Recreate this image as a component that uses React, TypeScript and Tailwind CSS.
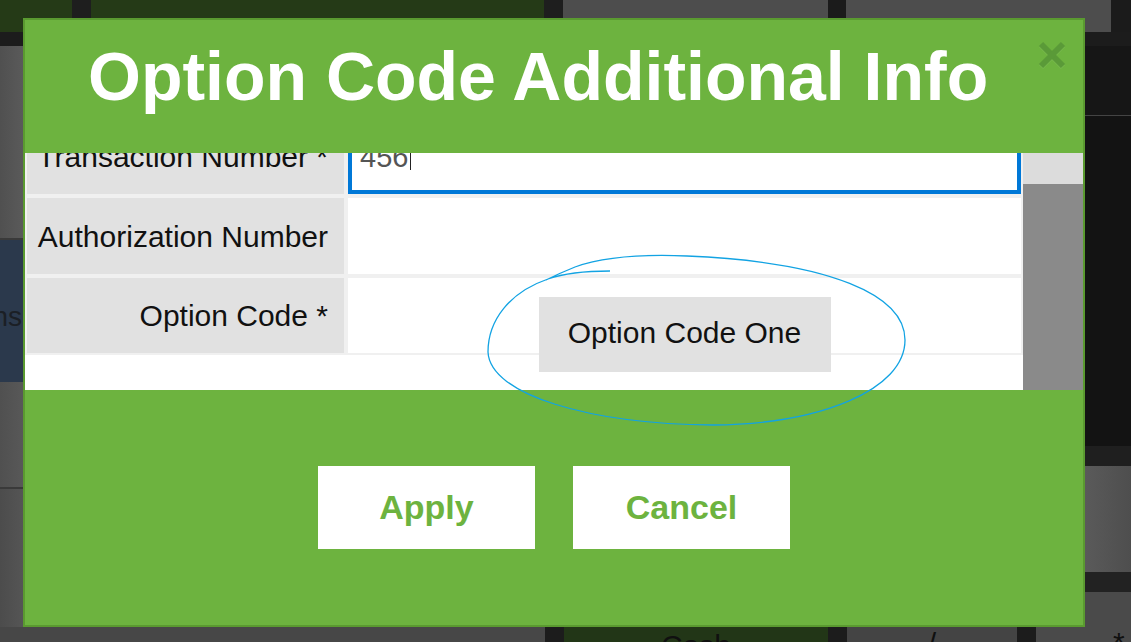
import React from "react";

const font = { fontFamily: '"Liberation Sans", Arial, sans-serif' };

const TopStrip = () => (
  <div className="flex h-[32px]">
    <div className="w-[72px] bg-[#253a17]" />
    <div className="w-[19px] bg-[#1e1e1e]" />
    <div className="w-[453px] bg-[#253a17]" />
    <div className="w-[19px] bg-[#1e1e1e]" />
    <div className="w-[265px] bg-[#4d4d4d]" />
    <div className="w-[18px] bg-[#1b1b1b]" />
    <div className="w-[265px] bg-[#4d4d4d]" />
    <div className="flex-1 bg-[#1b1b1b]" />
  </div>
);

const LeftColumn = () => (
  <div className="flex w-[23px] flex-col">
    <div className="h-[192px] bg-gradient-to-r from-[#505050] to-[#5a5a5a]" />
    <div className="h-[2px] bg-[#3a3a3a]" />
    <div className="flex h-[142px] items-center justify-end overflow-hidden bg-[#2b394c] pt-[12px]">
      <span className="whitespace-nowrap pr-[1px] text-[28px] text-[#1b1f25]">Trans</span>
    </div>
    <div className="h-[105px] bg-gradient-to-r from-[#505050] to-[#585858]" />
    <div className="h-[2px] bg-[#3a3a3a]" />
    <div className="flex-1 bg-gradient-to-r from-[#4c4c4c] to-[#555555]" />
  </div>
);

const RightColumn = () => (
  <div className="flex w-[46px] flex-col">
    <div className="h-[69px] bg-[#161616]" />
    <div className="h-[1px] bg-[#444444]" />
    <div className="h-[330px] bg-[#131313]" />
    <div className="h-[20px] bg-[#1f1f1f]" />
    <div className="h-[106px] bg-gradient-to-r from-[#5a5a5a] to-[#4e4e4e]" />
    <div className="h-[20px] bg-[#222222]" />
    <div className="flex-1 bg-[#4a4a4a]" />
  </div>
);

const BottomStrip = () => (
  <div className="flex h-[15px] overflow-hidden text-[30px] leading-none text-[#101010]">
    <div className="w-[545px] bg-[#474747]" />
    <div className="w-[19px] bg-[#1c1c1c]" />
    <div className="flex w-[264px] justify-center bg-[#223617] pt-[4px]">Cash</div>
    <div className="w-[19px] bg-[#1c1c1c]" />
    <div className="flex w-[170px] justify-center bg-[#444444] pt-[2px]">/</div>
    <div className="w-[19px] bg-[#1c1c1c]" />
    <div className="flex-1 bg-[#4a4a4a] pl-[77px] pt-[1px]">*</div>
  </div>
);

const Background = () => (
  <div className="flex h-full flex-col bg-[#141414]">
    <TopStrip />
    <div className="h-[14px] bg-[#1c1c1c]" />
    <div className="flex flex-1">
      <LeftColumn />
      <div className="flex-1 bg-[#141414]" />
      <RightColumn />
    </div>
    <BottomStrip />
  </div>
);

const CloseIcon = () => (
  <svg width="30" height="30" viewBox="0 0 30 30">
    <g stroke="#8cc66a" strokeWidth="6" opacity="0.35">
      <line x1="4" y1="5" x2="26" y2="27" />
      <line x1="26" y1="5" x2="4" y2="27" />
    </g>
    <g stroke="#5a9a38" strokeWidth="6">
      <line x1="4" y1="4" x2="26" y2="26" />
      <line x1="26" y1="4" x2="4" y2="26" />
    </g>
  </svg>
);

const Label = ({ children, h }: { children: React.ReactNode; h: string }) => (
  <div className={`flex ${h} items-center justify-end bg-[#e1e1e1] pr-[16px] text-[30px] text-[#111111]`}>
    {children}
  </div>
);

const Modal = () => (
  <div className="absolute left-[23px] top-[18px] flex h-[609px] w-[1062px] flex-col border-2 border-[#5a9a30] bg-[#6db33f]">
    {/* Header */}
    <div className="relative h-[133px] pl-[63px] pt-[22px]">
      <h1 className="whitespace-nowrap text-[68px] font-bold leading-none text-white">
        Option Code Additional Info
      </h1>
      <button className="absolute right-[16px] top-[20px]">
        <CloseIcon />
      </button>
    </div>

    {/* Body (scrolled) */}
    <div className="flex h-[237px] bg-white">
      <div className="flex-1 overflow-hidden">
        <div className="-mt-[37px] pb-[35px]">
          <div className="grid grid-cols-[317px_1fr] gap-[4px] bg-[#f0f0f0] p-[2px]">
            <Label h="h-[76px]">Transaction Number *</Label>
            <div className="flex h-[76px] items-center border-4 border-[#0078d7] bg-white pl-[8px] pt-[4px] text-[29px] text-[#555555]">
              <span>456</span>
              <span className="ml-[2px] inline-block h-[24px] w-[1px] bg-[#222222]" />
            </div>

            <Label h="h-[76px]">Authorization Number</Label>
            <div className="h-[76px] bg-white" />

            <Label h="h-[75px]">Option Code *</Label>
            <div className="flex h-[75px] justify-center bg-white pt-[19px]">
              <div className="flex h-[75px] w-[292px] shrink-0 items-center justify-center bg-[#e1e1e1] pb-[4px] text-[30px] text-[#111111]">
                Option Code One
              </div>
            </div>
          </div>
        </div>
      </div>
      {/* Scrollbar */}
      <div className="flex w-[60px] flex-col">
        <div className="h-[31px] bg-[#dcdcdc]" />
        <div className="flex-1 bg-[#8a8a8a]" />
      </div>
    </div>

    {/* Footer */}
    <div className="flex flex-1 items-center justify-center gap-[38px]">
      <button className="h-[83px] w-[217px] bg-white text-[34px] font-bold text-[#6db33f]">Apply</button>
      <button className="h-[83px] w-[217px] bg-white text-[34px] font-bold text-[#6db33f]">Cancel</button>
    </div>
  </div>
);

// hand-drawn marker ellipse drawn on top of the screenshot
const Annotation = () => (
  <svg className="pointer-events-none absolute left-0 top-0" width="1131" height="642" viewBox="0 0 1131 642">
    <path
      d="M 610 271 C 585 271 565 273 548 279 C 510 292 488 320 488 352 C 490 395 590 424 713 425 C 820 424 905 390 905 340 C 905 295 830 262 687 256 C 640 254 600 258 575 267 C 565 271 556 275 546 280"
      fill="none"
      stroke="#12a3e3"
      strokeWidth="1.3"
    />
  </svg>
);

export default function App() {
  return (
    <div className="relative h-[642px] w-[1131px] overflow-hidden" style={font}>
      <Background />
      <Modal />
      <Annotation />
    </div>
  );
}
